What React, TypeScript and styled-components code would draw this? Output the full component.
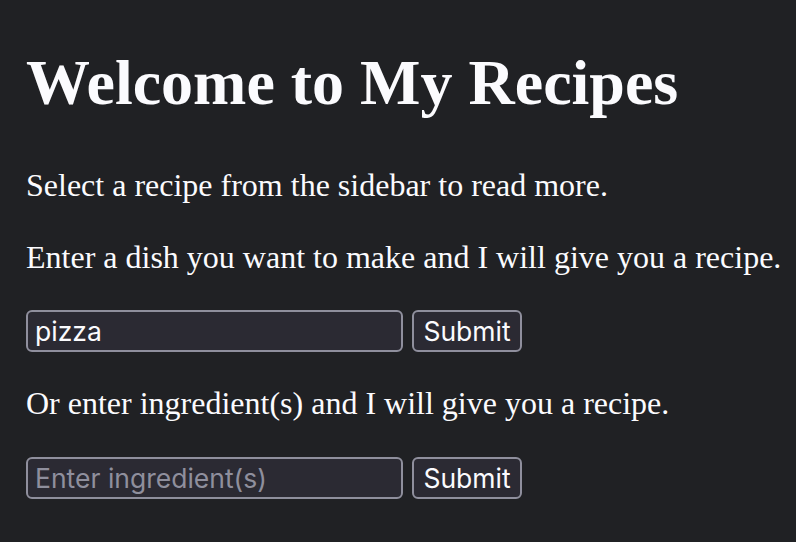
import React from "react";
import styled, { createGlobalStyle } from "styled-components";

const Global = createGlobalStyle`
  html, body {
    margin: 0;
    padding: 0;
    background: #202124;
  }
  body {
    color: #fbfbfe;
    font-family: "Liberation Serif", "Times New Roman", serif;
  }
`;

const Page = styled.main`
  padding: 46px 26px 0 26px;
  display: flex;
  flex-direction: column;
  align-items: flex-start;
`;

const Title = styled.h1`
  margin: 0 0 49px 0;
  font-size: 64px;
  line-height: 74px;
  font-weight: 700;
`;

const Text = styled.p<{ $gap: number }>`
  margin: 0 0 ${(p) => p.$gap}px 0;
  font-size: 32px;
  line-height: 33px;
  white-space: nowrap;
`;

const Form = styled.form<{ $gap: number }>`
  display: flex;
  gap: 9px;
  margin: 0 0 ${(p) => p.$gap}px 0;
`;

const Field = styled.input`
  box-sizing: border-box;
  width: 377px;
  height: 42px;
  padding: 0 7px;
  border: 2px solid #8f8f9d;
  border-radius: 6px;
  background: #2b2a33;
  color: #fbfbfe;
  font-family: Inter, "Noto Sans", sans-serif;
  font-size: 26.5px;
  outline: none;
  &::placeholder {
    color: #8f8f9d;
  }
`;

const Button = styled.button`
  box-sizing: border-box;
  width: 110px;
  height: 42px;
  padding: 0;
  border: 2px solid #8f8f9d;
  border-radius: 6px;
  background: #2b2a33;
  color: #fbfbfe;
  font-family: Inter, "Noto Sans", sans-serif;
  font-size: 26.5px;
`;

export default function App() {
  return (
    <>
      <Global />
      <Page>
        <Title>Welcome to My Recipes</Title>
        <Text $gap={39}>Select a recipe from the sidebar to read more.</Text>
        <Text $gap={36}>Enter a dish you want to make and I will give you a recipe.</Text>
        <Form $gap={35} onSubmit={(e) => e.preventDefault()}>
          <Field defaultValue="pizza" />
          <Button type="submit">Submit</Button>
        </Form>
        <Text $gap={37}>Or enter ingredient(s) and I will give you a recipe.</Text>
        <Form $gap={0} onSubmit={(e) => e.preventDefault()}>
          <Field placeholder="Enter ingredient(s)" />
          <Button type="submit">Submit</Button>
        </Form>
      </Page>
    </>
  );
}
